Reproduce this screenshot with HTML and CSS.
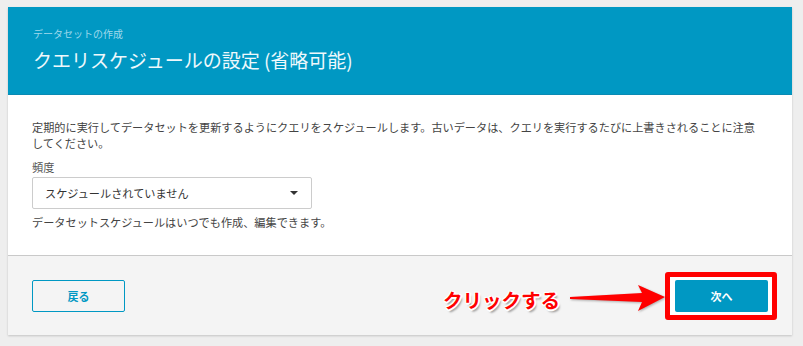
FILE: index.html
```html
<!DOCTYPE html>
<html lang="ja">
<head>
    <meta charset="UTF-8">
    <meta name="viewport" content="width=device-width, initial-scale=1.0">
    <title>クエリスケジュールの設定</title>
    <link rel="stylesheet" href="styles.css">
</head>
<body>
    <div class="card">
        <div class="card-header">
            <div class="crumb">データセットの作成</div>
            <h1 class="title">クエリスケジュールの設定 (省略可能)</h1>
        </div>

        <div class="card-body">
            <p class="desc">定期的に実行してデータセットを更新するようにクエリをスケジュールします。古いデータは、クエリを実行するたびに上書きされることに注意してください。</p>
            <div class="field-label">頻度</div>
            <div class="select">
                <span>スケジュールされていません</span>
                <span class="caret"></span>
            </div>
            <p class="hint">データセットスケジュールはいつでも作成、編集できます。</p>
        </div>

        <div class="card-footer">
            <button class="btn btn-outline">戻る</button>
            <div class="callout">
                <span class="callout-text">クリックする</span>
                <svg class="arrow" width="96" height="30" viewBox="0 0 96 30">
                    <polygon points="0,14 72,10 68,2 95,14 68,28 72,19 0,16" fill="#f00" />
                </svg>
                <div class="frame">
                    <button class="btn btn-primary">次へ</button>
                </div>
            </div>
        </div>
    </div>
</body>
</html>
```

FILE: styles.css
```css
body { margin: 0; background-color: #eeeeee; font-family: "Noto Sans CJK JP", "Noto Sans", sans-serif; color: #444; padding: 7px 11px 10px 8px; }
.card { background-color: #fff; box-shadow: 0 1px 2px rgba(0, 0, 0, 0.18); }

.card-header { background-color: #0098c3; height: 88px; box-sizing: border-box; padding: 20px 25px 0; border-bottom: 1px solid #0a8ab3; }
.crumb { font-size: 10px; line-height: 14px; color: #9fd8ec; }
.title { margin: 6px 0 0; font-size: 19px; line-height: 26px; font-weight: normal; color: #eef8fc; }

.card-body { padding: 24px 30px 25px 24px; font-size: 11.17px; }
.desc { margin: 0; line-height: 16px; }
.field-label { margin-top: 8px; line-height: 16px; color: #555; }
.select { margin-top: 2px; width: 280px; height: 32px; box-sizing: border-box; border: 1px solid #ccc; border-radius: 2px; display: flex; align-items: center; justify-content: space-between; padding: 0 12px 0 12px; color: #333; }
.caret { width: 0; height: 0; border-left: 4px solid transparent; border-right: 4px solid transparent; border-top: 4px solid #333; margin-right: 1px; }
.hint { margin: 5px 0 0; line-height: 16px; }

.card-footer { background-color: #f4f4f4; border-top: 1px solid #c9c9c9; height: 80px; box-sizing: border-box; padding: 0 15px 0 24px; display: flex; align-items: center; }
.btn { font-family: inherit; font-size: 11px; font-weight: bold; height: 32px; width: 93px; border-radius: 2px; cursor: pointer; }
.btn-outline { background-color: transparent; border: 1px solid #0098c3; color: #0098c3; }
.btn-primary { background-color: #0098c3; border: none; color: #fff; display: block; }

.callout { margin-left: auto; display: flex; align-items: center; }
.callout-text { font-size: 19.5px; font-weight: bold; color: #f00; margin-top: 8px; text-shadow: 1px 1px 0 #fff, -1px -1px 0 #fff, 1px -1px 0 #fff, -1px 1px 0 #fff, 0 2px 0 #fff, 2px 0 0 #fff, 2px 3px 2px rgba(0, 0, 0, 0.35); }
.arrow { margin-left: 10px; margin-top: 4px; filter: drop-shadow(1px 1px 1px rgba(0, 0, 0, 0.3)); }
.frame { border: 5px solid #f00; border-radius: 3px; background-color: #fff; padding: 3px 4px 3px 5px; margin-left: -1px; }
```
